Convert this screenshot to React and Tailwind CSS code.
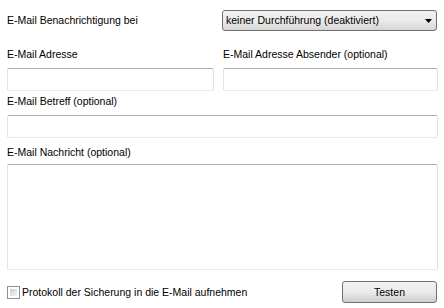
export default function App() {
  const inputCls =
    "block w-full h-[23px] bg-white border border-t-[#abadb3] border-l-[#e2e3ea] border-r-[#dbdfe6] border-b-[#e3e9ef] rounded-[2px]";

  return (
    <div className="w-[444px] h-[308px] bg-white pl-[7px] pr-[6px] pt-[10px] font-['Liberation_Sans',Arial,sans-serif] text-[10.5px] leading-[13px] text-black overflow-hidden">
      {/* Notification select row */}
      <div className="flex items-center h-[21px]">
        <div className="w-[215px]">E-Mail Benachrichtigung bei</div>
        <div className="w-[215px] h-[21px] flex items-center justify-between pl-[3px] pr-[3px] border border-[#707070] rounded-[3px] bg-gradient-to-b from-[#f2f2f2] via-[#ebebeb] to-[#d6d6d6]">
          <span>keiner Durchführung (deaktiviert)</span>
          <svg width="7" height="4" viewBox="0 0 7 4" className="mr-[1px]">
            <path d="M0 0H7L3.5 4Z" fill="#000" />
          </svg>
        </div>
      </div>

      {/* Address fields */}
      <div className="grid grid-cols-[207px_215px] gap-x-[9px] mt-[17px]">
        <div>
          <div>E-Mail Adresse</div>
          <div className={`mt-[7px] ${inputCls}`}></div>
        </div>
        <div>
          <div>E-Mail Adresse Absender (optional)</div>
          <div className={`mt-[7px] ${inputCls}`}></div>
        </div>
      </div>

      {/* Subject */}
      <div className="mt-[4px]">E-Mail Betreff (optional)</div>
      <div className={`mt-[7px] ${inputCls}`}></div>

      {/* Message */}
      <div className="mt-[8px]">E-Mail Nachricht (optional)</div>
      <div className="mt-[5px] h-[106px] bg-white border border-t-[#abadb3] border-l-[#e2e3ea] border-r-[#dbdfe6] border-b-[#e3e9ef] rounded-[2px]"></div>

      {/* Bottom row */}
      <div className="mt-[11px] flex items-center justify-between h-[22px]">
        <label className="flex items-center gap-[2px]">
          <span className="w-[13px] h-[13px] border border-[#8e8f8f] bg-white p-[2px] flex">
            <span className="flex-1 bg-gradient-to-br from-[#cbcfd5] to-[#f6f6f6]"></span>
          </span>
          <span>Protokoll der Sicherung in die E-Mail aufnehmen</span>
        </label>
        <button className="w-[95px] h-[22px] mr-[1px] border border-[#707070] rounded-[3px] bg-gradient-to-b from-[#f2f2f2] via-[#ebebeb] to-[#cfcfcf] text-[10.5px]">
          Testen
        </button>
      </div>
    </div>
  );
}
